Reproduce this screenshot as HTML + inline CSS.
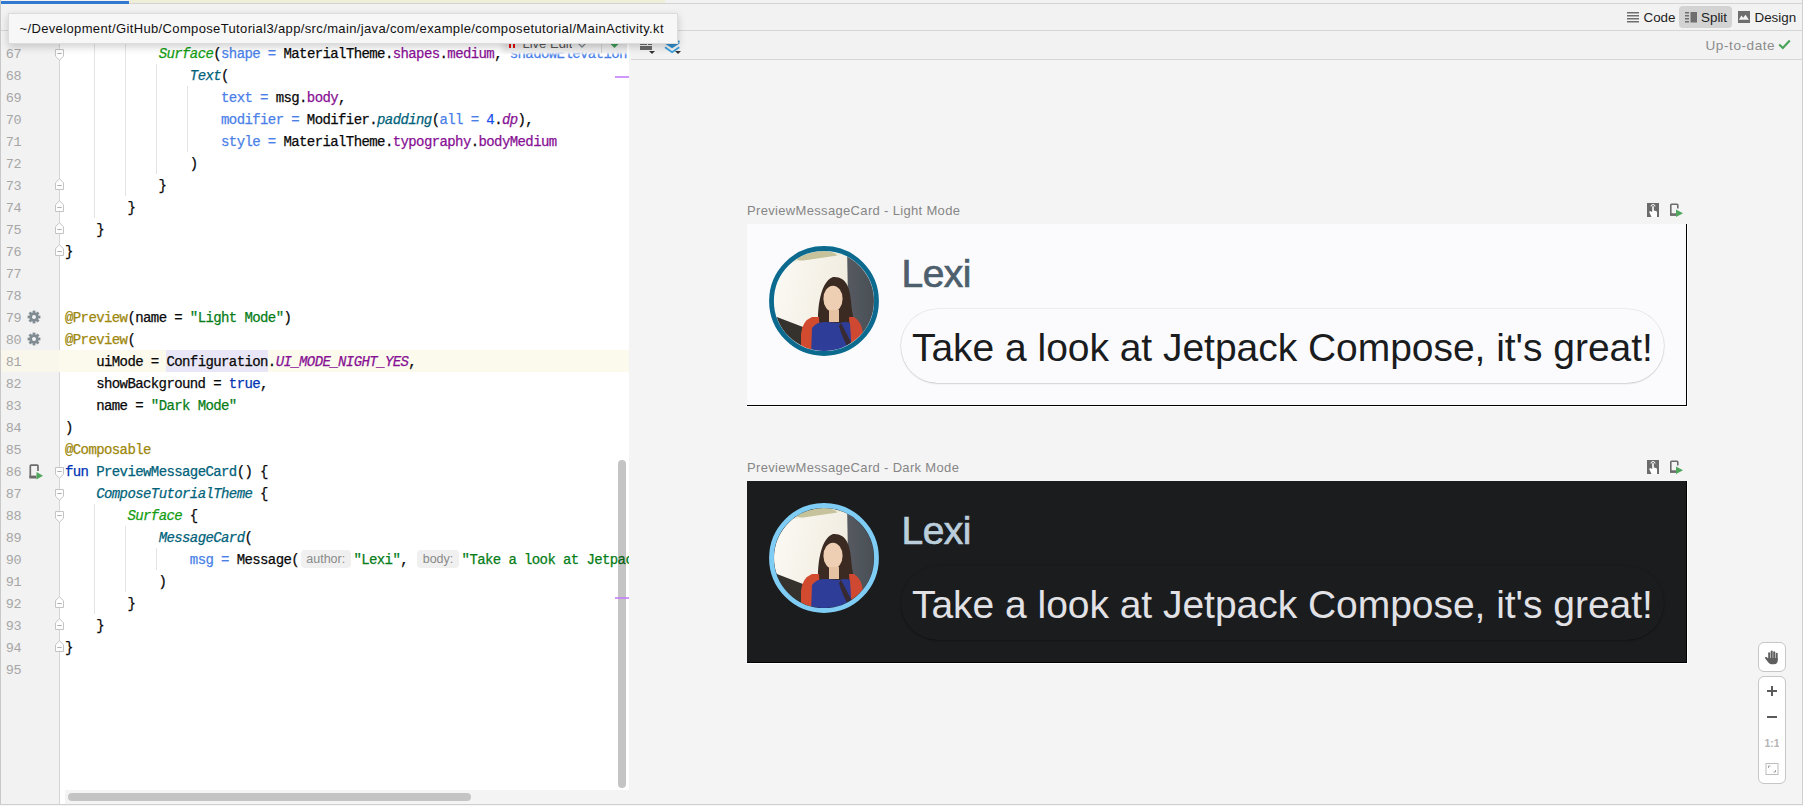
<!DOCTYPE html>
<html><head><meta charset="utf-8"><style>
*{margin:0;padding:0;box-sizing:border-box}
html,body{width:1803px;height:806px;overflow:hidden;background:#f3f3f3;font-family:"Liberation Sans",sans-serif}
.abs{position:absolute}
#editor{position:absolute;left:0;top:0;width:629px;height:806px;background:#fff;overflow:hidden}
#gutter{position:absolute;left:0;top:0;width:60px;height:806px;background:#f2f2f2}
.ln{position:absolute;left:65px;height:22px;line-height:22px;font-family:"Liberation Mono",monospace;font-size:14px;letter-spacing:-0.6px;white-space:pre;color:#080808;-webkit-text-stroke:0.25px currentColor}
.gn{position:absolute;left:0;width:21px;text-align:right;height:22px;line-height:22px;font-family:"Liberation Mono",monospace;font-size:13.5px;letter-spacing:-0.5px;color:#a6a6a6}
.hint{position:absolute;height:18px;line-height:18px;background:#f0f0f0;border-radius:4px;color:#8a8a8a;font-size:12.5px;text-align:center}

.lbl{position:absolute;font-size:13px;letter-spacing:0.33px;color:#868686;white-space:pre;line-height:16px}
.name{position:absolute;font-size:39px;line-height:44px;letter-spacing:-0.55px;-webkit-text-stroke:0.7px currentColor;white-space:pre}
.body{position:absolute;font-size:39px;line-height:44px;letter-spacing:-0.035px;white-space:pre}
.tb{position:absolute;font-size:13.4px;line-height:17px;color:#1e1e1e;white-space:pre}

</style></head><body>
<div id="editor">
  <div id="gutter"></div>
  <div class="abs" style="left:59px;top:0;width:1px;height:806px;background:#d6d6d6"></div>
  <div class="abs" style="left:0;top:350px;width:629px;height:22px;background:#fcfaed"></div>
  <div class="abs" style="left:1px;top:350px;width:58px;height:22px;background:#f9f7eb"></div>
  <div class="abs" style="left:166px;top:350px;width:102px;height:22px;background:#e9e6f7"></div>
  <div class="abs" style="left:94px;top:0px;width:1px;height:218px;background:#e4e4e4"></div><div class="abs" style="left:125px;top:0px;width:1px;height:196px;background:#e4e4e4"></div><div class="abs" style="left:156px;top:64px;width:1px;height:110px;background:#e4e4e4"></div><div class="abs" style="left:187px;top:86px;width:1px;height:66px;background:#e4e4e4"></div><div class="abs" style="left:94px;top:504px;width:1px;height:110px;background:#e4e4e4"></div><div class="abs" style="left:125px;top:526px;width:1px;height:66px;background:#e4e4e4"></div><div class="abs" style="left:156px;top:548px;width:1px;height:22px;background:#e4e4e4"></div>
  <div class="gn" style="top:44px">67</div><div class="gn" style="top:66px">68</div><div class="gn" style="top:88px">69</div><div class="gn" style="top:110px">70</div><div class="gn" style="top:132px">71</div><div class="gn" style="top:154px">72</div><div class="gn" style="top:176px">73</div><div class="gn" style="top:198px">74</div><div class="gn" style="top:220px">75</div><div class="gn" style="top:242px">76</div><div class="gn" style="top:264px">77</div><div class="gn" style="top:286px">78</div><div class="gn" style="top:308px">79</div><div class="gn" style="top:330px">80</div><div class="gn" style="top:352px">81</div><div class="gn" style="top:374px">82</div><div class="gn" style="top:396px">83</div><div class="gn" style="top:418px">84</div><div class="gn" style="top:440px">85</div><div class="gn" style="top:462px">86</div><div class="gn" style="top:484px">87</div><div class="gn" style="top:506px">88</div><div class="gn" style="top:528px">89</div><div class="gn" style="top:550px">90</div><div class="gn" style="top:572px">91</div><div class="gn" style="top:594px">92</div><div class="gn" style="top:616px">93</div><div class="gn" style="top:638px">94</div><div class="gn" style="top:660px">95</div>
  <svg class="abs" style="left:55px;top:48.5px" width="9" height="12" viewBox="0 0 9 12"><polygon points="0.5,0.5 8.5,0.5 8.5,7.3 4.5,11.2 0.5,7.3" fill="#fdfdfd" stroke="#c4c4c4" stroke-width="1"/><rect x="2.3" y="4.0" width="4.4" height="1" fill="#b0b0b0"/></svg><svg class="abs" style="left:55px;top:466.5px" width="9" height="12" viewBox="0 0 9 12"><polygon points="0.5,0.5 8.5,0.5 8.5,7.3 4.5,11.2 0.5,7.3" fill="#fdfdfd" stroke="#c4c4c4" stroke-width="1"/><rect x="2.3" y="4.0" width="4.4" height="1" fill="#b0b0b0"/></svg><svg class="abs" style="left:55px;top:488.5px" width="9" height="12" viewBox="0 0 9 12"><polygon points="0.5,0.5 8.5,0.5 8.5,7.3 4.5,11.2 0.5,7.3" fill="#fdfdfd" stroke="#c4c4c4" stroke-width="1"/><rect x="2.3" y="4.0" width="4.4" height="1" fill="#b0b0b0"/></svg><svg class="abs" style="left:55px;top:510.5px" width="9" height="12" viewBox="0 0 9 12"><polygon points="0.5,0.5 8.5,0.5 8.5,7.3 4.5,11.2 0.5,7.3" fill="#fdfdfd" stroke="#c4c4c4" stroke-width="1"/><rect x="2.3" y="4.0" width="4.4" height="1" fill="#b0b0b0"/></svg><svg class="abs" style="left:55px;top:177.5px" width="9" height="12" viewBox="0 0 9 12"><polygon points="0.5,11.5 8.5,11.5 8.5,4.7 4.5,0.8 0.5,4.7" fill="#fdfdfd" stroke="#c4c4c4" stroke-width="1"/><rect x="2.3" y="7.0" width="4.4" height="1" fill="#b0b0b0"/></svg><svg class="abs" style="left:55px;top:199.5px" width="9" height="12" viewBox="0 0 9 12"><polygon points="0.5,11.5 8.5,11.5 8.5,4.7 4.5,0.8 0.5,4.7" fill="#fdfdfd" stroke="#c4c4c4" stroke-width="1"/><rect x="2.3" y="7.0" width="4.4" height="1" fill="#b0b0b0"/></svg><svg class="abs" style="left:55px;top:221.5px" width="9" height="12" viewBox="0 0 9 12"><polygon points="0.5,11.5 8.5,11.5 8.5,4.7 4.5,0.8 0.5,4.7" fill="#fdfdfd" stroke="#c4c4c4" stroke-width="1"/><rect x="2.3" y="7.0" width="4.4" height="1" fill="#b0b0b0"/></svg><svg class="abs" style="left:55px;top:243.5px" width="9" height="12" viewBox="0 0 9 12"><polygon points="0.5,11.5 8.5,11.5 8.5,4.7 4.5,0.8 0.5,4.7" fill="#fdfdfd" stroke="#c4c4c4" stroke-width="1"/><rect x="2.3" y="7.0" width="4.4" height="1" fill="#b0b0b0"/></svg><svg class="abs" style="left:55px;top:595.5px" width="9" height="12" viewBox="0 0 9 12"><polygon points="0.5,11.5 8.5,11.5 8.5,4.7 4.5,0.8 0.5,4.7" fill="#fdfdfd" stroke="#c4c4c4" stroke-width="1"/><rect x="2.3" y="7.0" width="4.4" height="1" fill="#b0b0b0"/></svg><svg class="abs" style="left:55px;top:617.5px" width="9" height="12" viewBox="0 0 9 12"><polygon points="0.5,11.5 8.5,11.5 8.5,4.7 4.5,0.8 0.5,4.7" fill="#fdfdfd" stroke="#c4c4c4" stroke-width="1"/><rect x="2.3" y="7.0" width="4.4" height="1" fill="#b0b0b0"/></svg><svg class="abs" style="left:55px;top:639.5px" width="9" height="12" viewBox="0 0 9 12"><polygon points="0.5,11.5 8.5,11.5 8.5,4.7 4.5,0.8 0.5,4.7" fill="#fdfdfd" stroke="#c4c4c4" stroke-width="1"/><rect x="2.3" y="7.0" width="4.4" height="1" fill="#b0b0b0"/></svg>
  <svg class="abs" style="left:27px;top:310px" width="14" height="14" viewBox="0 0 14 14"><g fill="#808b92"><circle cx="7" cy="7" r="4.6"/><rect x="5.6" y="0.6" width="2.8" height="3" transform="rotate(0 7 7)"/><rect x="5.6" y="0.6" width="2.8" height="3" transform="rotate(45 7 7)"/><rect x="5.6" y="0.6" width="2.8" height="3" transform="rotate(90 7 7)"/><rect x="5.6" y="0.6" width="2.8" height="3" transform="rotate(135 7 7)"/><rect x="5.6" y="0.6" width="2.8" height="3" transform="rotate(180 7 7)"/><rect x="5.6" y="0.6" width="2.8" height="3" transform="rotate(225 7 7)"/><rect x="5.6" y="0.6" width="2.8" height="3" transform="rotate(270 7 7)"/><rect x="5.6" y="0.6" width="2.8" height="3" transform="rotate(315 7 7)"/></g><circle cx="7" cy="7" r="2" fill="#f2f2f2"/></svg><svg class="abs" style="left:27px;top:332px" width="14" height="14" viewBox="0 0 14 14"><g fill="#808b92"><circle cx="7" cy="7" r="4.6"/><rect x="5.6" y="0.6" width="2.8" height="3" transform="rotate(0 7 7)"/><rect x="5.6" y="0.6" width="2.8" height="3" transform="rotate(45 7 7)"/><rect x="5.6" y="0.6" width="2.8" height="3" transform="rotate(90 7 7)"/><rect x="5.6" y="0.6" width="2.8" height="3" transform="rotate(135 7 7)"/><rect x="5.6" y="0.6" width="2.8" height="3" transform="rotate(180 7 7)"/><rect x="5.6" y="0.6" width="2.8" height="3" transform="rotate(225 7 7)"/><rect x="5.6" y="0.6" width="2.8" height="3" transform="rotate(270 7 7)"/><rect x="5.6" y="0.6" width="2.8" height="3" transform="rotate(315 7 7)"/></g><circle cx="7" cy="7" r="2" fill="#f2f2f2"/></svg><svg class="abs" style="left:28px;top:463px" width="16" height="17" viewBox="0 0 16 17"><path d="M2.3,15 L2.3,3 Q2.3,2.2 3.1,2.2 L9.2,2.2 Q10,2.2 10,3 L10,8" fill="none" stroke="#6b6b6b" stroke-width="1.7"/><rect x="1.5" y="12.6" width="7" height="2.9" fill="#6b6b6b"/><polygon points="8.5,9 15,12.7 8.5,16.5" fill="#4fa65c"/></svg>
  <div class="ln" style="top:43px"><span style="color:#080808">            </span><span style="color:#129c12;font-style:italic">Surface</span><span style="color:#080808">(</span><span style="color:#4a7fe8">shape =</span><span style="color:#080808"> MaterialTheme.</span><span style="color:#871094">shapes</span><span style="color:#080808">.</span><span style="color:#871094">medium</span><span style="color:#080808">, </span><span style="color:#4a7fe8">shadowElevation</span></div><div class="ln" style="top:65px"><span style="color:#080808">                </span><span style="color:#00627a;font-style:italic">Text</span><span style="color:#080808">(</span></div><div class="ln" style="top:87px"><span style="color:#080808">                    </span><span style="color:#4a7fe8">text =</span><span style="color:#080808"> msg.</span><span style="color:#871094">body</span><span style="color:#080808">,</span></div><div class="ln" style="top:109px"><span style="color:#080808">                    </span><span style="color:#4a7fe8">modifier =</span><span style="color:#080808"> Modifier.</span><span style="color:#00627a;font-style:italic">padding</span><span style="color:#080808">(</span><span style="color:#4a7fe8">all =</span><span style="color:#080808"> </span><span style="color:#1750eb">4</span><span style="color:#080808">.</span><span style="color:#871094;font-style:italic">dp</span><span style="color:#080808">),</span></div><div class="ln" style="top:131px"><span style="color:#080808">                    </span><span style="color:#4a7fe8">style =</span><span style="color:#080808"> MaterialTheme.</span><span style="color:#871094">typography</span><span style="color:#080808">.</span><span style="color:#871094">bodyMedium</span></div><div class="ln" style="top:153px"><span style="color:#080808">                )</span></div><div class="ln" style="top:175px"><span style="color:#080808">            }</span></div><div class="ln" style="top:197px"><span style="color:#080808">        }</span></div><div class="ln" style="top:219px"><span style="color:#080808">    }</span></div><div class="ln" style="top:241px"><span style="color:#080808">}</span></div><div class="ln" style="top:307px"><span style="color:#9e880d">@Preview</span><span style="color:#080808">(name = </span><span style="color:#067d17">"Light Mode"</span><span style="color:#080808">)</span></div><div class="ln" style="top:329px"><span style="color:#9e880d">@Preview</span><span style="color:#080808">(</span></div><div class="ln" style="top:351px"><span style="color:#080808">    uiMode = </span><span style="color:#080808">Configuration</span><span style="color:#080808">.</span><span style="color:#871094;font-style:italic">UI_MODE_NIGHT_YES</span><span style="color:#080808">,</span></div><div class="ln" style="top:373px"><span style="color:#080808">    showBackground = </span><span style="color:#0033b3">true</span><span style="color:#080808">,</span></div><div class="ln" style="top:395px"><span style="color:#080808">    name = </span><span style="color:#067d17">"Dark Mode"</span></div><div class="ln" style="top:417px"><span style="color:#080808">)</span></div><div class="ln" style="top:439px"><span style="color:#9e880d">@Composable</span></div><div class="ln" style="top:461px"><span style="color:#0033b3">fun</span><span style="color:#080808"> </span><span style="color:#00627a">PreviewMessageCard</span><span style="color:#080808">() {</span></div><div class="ln" style="top:483px"><span style="color:#080808">    </span><span style="color:#00627a;font-style:italic">ComposeTutorialTheme</span><span style="color:#080808"> {</span></div><div class="ln" style="top:505px"><span style="color:#080808">        </span><span style="color:#129c12;font-style:italic">Surface</span><span style="color:#080808"> {</span></div><div class="ln" style="top:527px"><span style="color:#080808">            </span><span style="color:#00627a;font-style:italic">MessageCard</span><span style="color:#080808">(</span></div><div class="ln" style="top:549px"><span style="color:#080808">                </span><span style="color:#4a7fe8">msg =</span><span style="color:#080808"> Message(</span></div><div class="ln" style="top:571px"><span style="color:#080808">            )</span></div><div class="ln" style="top:593px"><span style="color:#080808">        }</span></div><div class="ln" style="top:615px"><span style="color:#080808">    }</span></div><div class="ln" style="top:637px"><span style="color:#080808">}</span></div><div class="hint" style="left:301px;top:550px;width:49.5px">author:</div><div class="ln" style="top:549px;left:353.4px"><span style="color:#067d17">"Lexi"</span><span style="color:#080808">,</span></div><div class="hint" style="left:417px;top:550px;width:42px">body:</div><div class="ln" style="top:549px;left:461.6px"><span style="color:#067d17">"Take a look at Jetpack Compose"</span></div>
  <div class="abs" style="left:65px;top:790px;width:564px;height:14px;background:#f4f4f4"></div>
  <div class="abs" style="left:68px;top:793px;width:403px;height:8px;border-radius:4px;background:#c4c4c4"></div>
  <div class="abs" style="left:0;top:804px;width:629px;height:1px;background:#d0d0d0"></div>
  <div class="abs" style="left:618px;top:460px;width:8px;height:328px;border-radius:4px;background:rgba(0,0,0,0.231)"></div>
  <div class="abs" style="left:615px;top:76px;width:14px;height:2px;background:rgba(195,125,250,0.8)"></div><div class="abs" style="left:615px;top:597px;width:14px;height:2px;background:rgba(195,125,250,0.8)"></div>
  
<div class="abs" style="left:498px;top:43px;width:129px;height:12px;background:linear-gradient(#e4e4e4,#f0f0f0 75%,rgba(246,246,246,0.6) 90%,rgba(255,255,255,0));-webkit-mask-image:linear-gradient(to right,transparent,#000 8px)"></div>
<div class="abs" style="left:509px;top:43px;width:2px;height:5px;background:#e01010"></div>
<div class="abs" style="left:513px;top:43px;width:2px;height:5px;background:#e01010"></div>
<div class="abs" style="left:522.5px;top:36px;font-size:13px;line-height:16px;color:#555;white-space:pre;clip-path:inset(7px 0 0 0)">Live Edit</div>
<svg class="abs" style="left:577px;top:43px" width="10" height="6" viewBox="0 0 10 6"><path d="M1,0 L5,4 L9,0" fill="none" stroke="#7a8590" stroke-width="1.3"/></svg>
<div class="abs" style="left:601px;top:43px;width:1px;height:10px;background:#d0d0d0"></div>
<svg class="abs" style="left:609px;top:43px" width="11" height="6" viewBox="0 0 11 6"><polygon points="0.5,0 10.5,0 5.5,5" fill="#3f9a52"/></svg>

</div>

<div id="preview" class="abs" style="left:629px;top:0;width:1174px;height:806px;background:#f4f4f4"></div>
<!-- top tab bar -->
<div class="abs" style="left:0;top:0;width:1803px;height:3px;background:#f2f2f2"></div>
<div class="abs" style="left:129px;top:0;width:536px;height:3px;background:#efeed9"></div>
<!-- toolbar row -->
<div class="abs" style="left:0;top:3px;width:1802px;height:27px;background:#f2f2f2"></div>
<div class="abs" style="left:129px;top:3px;width:1673px;height:1px;background:#d4d4d4"></div>
<div class="abs" style="left:1px;top:1px;width:128px;height:3px;background:#3079cf"></div>
<div class="abs" style="left:0;top:30px;width:1802px;height:1px;background:#d6d6d6"></div>
<div class="abs" style="left:631px;top:31px;width:1171px;height:28px;background:#f2f2f2"></div>
<div class="abs" style="left:631px;top:59px;width:1171px;height:1px;background:#d6d6d6"></div>
<div class="abs" style="left:1802px;top:0;width:1px;height:806px;background:#d0d0d0"></div>
<div class="abs" style="left:0;top:0;width:1px;height:806px;background:#c9c9c9"></div>
<div class="abs" style="left:0;top:804px;width:1803px;height:1px;background:#d0d0d0"></div>
<div class="abs" style="left:0;top:805px;width:1803px;height:1px;background:#f6f6f6"></div>
<!-- Code / Split / Design -->
<svg class="abs" style="left:1627px;top:12px" width="12" height="11" viewBox="0 0 12 11"><g fill="#6e6e6e"><rect y="0" width="12" height="1.5"/><rect y="3" width="12" height="1.5"/><rect y="6" width="12" height="1.5"/><rect y="9" width="12" height="1.5"/></g></svg>
<div class="tb" style="left:1643.5px;top:9px">Code</div>
<div class="abs" style="left:1679px;top:6px;width:53px;height:22px;border-radius:4px;background:#d3d3d3"></div>
<svg class="abs" style="left:1685px;top:12px" width="12" height="11" viewBox="0 0 12 11"><g fill="#6e6e6e"><rect x="0" y="0" width="4" height="1.5"/><rect x="0" y="3" width="4" height="1.5"/><rect x="0" y="6" width="4" height="1.5"/><rect x="0" y="9" width="4" height="1.5"/><rect x="5.5" y="0" width="6.5" height="10.5"/></g></svg>
<div class="tb" style="left:1701px;top:9px">Split</div>
<svg class="abs" style="left:1738px;top:11px" width="12" height="12" viewBox="0 0 12 12"><rect width="12" height="12" fill="#6e6e6e"/><polygon points="0.9,8.7 3.4,4.6 5.2,6.8 7.5,3.7 10.9,8.7" fill="#f4f4f4"/></svg>
<div class="tb" style="left:1754.5px;top:9px">Design</div>
<!-- up-to-date -->
<div class="tb" style="left:1705.5px;top:37px;font-size:13.6px;letter-spacing:0.55px;color:#8c8c8c">Up-to-date</div>
<svg class="abs" style="left:1778px;top:39px" width="13" height="11" viewBox="0 0 13 11"><path d="M1.2,5.5 L4.8,9 L11.8,1.5" fill="none" stroke="#4aa35b" stroke-width="2.2"/></svg>
<!-- left preview toolbar icons -->
<svg class="abs" style="left:639px;top:42px" width="18" height="12" viewBox="0 0 18 12"><g fill="#6b6b6b"><rect x="1" y="1" width="7" height="2"/><rect x="9" y="1" width="4" height="2"/><rect x="1" y="4" width="12" height="4"/></g><polygon points="10,9 16,9 13,12" fill="#333"/></svg>
<svg class="abs" style="left:664px;top:38px" width="20" height="17" viewBox="0 0 20 17"><polygon points="0.2,5.2 16.1,5.2 8.1,10.2" fill="#2e8ecb"/><rect x="13.8" y="2.6" width="1.8" height="2" fill="#2e8ecb"/><path d="M1,9.2 L8.1,14.2 L15.3,9.2" fill="none" stroke="#3a9fdc" stroke-width="1.8"/><polygon points="11,13 17,13 14,16" fill="#333"/></svg>

<div class="lbl" style="left:747px;top:203px">PreviewMessageCard - Light Mode</div>
<svg class="abs" style="left:1647px;top:203px" width="12" height="14" viewBox="0 0 12 14">
<rect x="0" y="0" width="12" height="14" fill="#6b6b6b"/>
<path d="M4,3.5 a2,2 0 1 1 4,0" fill="none" stroke="#fff" stroke-width="1"/>
<path d="M5.2,3.5 L5.2,9 L3,8 L2.2,9 L4.5,14 L10,14 L10,9.5 Q10,8 9,8 L6.8,7.5 L6.8,3.5 Q6,2.6 5.2,3.5Z" fill="#fff"/>
</svg>
<svg class="abs" style="left:1669px;top:203px" width="14" height="14" viewBox="0 0 14 14">
<path d="M1.8,12 L1.8,2 Q1.8,1.2 2.6,1.2 L8,1.2 Q8.8,1.2 8.8,2 L8.8,5.5" fill="none" stroke="#6b6b6b" stroke-width="1.6"/>
<rect x="1" y="10.3" width="6" height="2.6" fill="#6b6b6b"/>
<polygon points="7,6.5 14,10.2 7,14" fill="#4fa65c"/>
</svg>
<div class="abs" style="left:747px;top:224px;width:940px;height:182px;background:#fbfbfe">
  <div class="abs" style="right:0;top:0;width:1px;height:182px;background:#000"></div>
  <div class="abs" style="left:0;bottom:0;width:940px;height:1px;background:#000"></div>
</div>
<div class="abs" style="left:1687px;top:224px;width:1px;height:183px;background:#fff"></div>
<div class="abs" style="left:746px;top:406px;width:941px;height:1px;background:#fff"></div>
<svg class="abs" style="left:769.3px;top:246.4px" width="110" height="110" viewBox="0 0 110 110">
<defs><clipPath id="c246.4"><circle cx="55" cy="55" r="50"/></clipPath><filter id="b246.4"><feGaussianBlur stdDeviation="0.7"/></filter><linearGradient id="w246.4" x1="0" y1="0" x2="1" y2="0.3"><stop offset="0" stop-color="#fcfbf6"/><stop offset="1" stop-color="#f1ece0"/></linearGradient><linearGradient id="g246.4" x1="0" y1="0" x2="1" y2="0"><stop offset="0" stop-color="#565b62"/><stop offset="1" stop-color="#474c52"/></linearGradient></defs>
<g clip-path="url(#c246.4)"><g filter="url(#b246.4)">
<rect x="0" y="0" width="110" height="110" fill="#ecead8"/>
<ellipse cx="46" cy="10" rx="22" ry="6" fill="#c5c29c"/>
<polygon points="0,27 24,16 79,8 79,110 0,110" fill="url(#w246.4)"/>
<polygon points="78,0 110,0 110,110 80,110" fill="url(#g246.4)"/>
<polygon points="0,68 34,81 34,110 0,110" fill="#36332f"/>
<path d="M50,92 C47,68 50,36 64,31 C77,30 81,42 82,55 C83,70 86,80 91,93 L86,102 L52,102 Z" fill="#3a2920"/>
<ellipse cx="64" cy="52.8" rx="9.6" ry="13" fill="#efcfb4"/>
<rect x="60" y="64" width="10" height="12" fill="#e6c2a3"/>
<path d="M32,110 L32,88 Q33,75 43,71 L50,71 L52,110 Z" fill="#d24b2f"/>
<path d="M80,71 L85,71 Q93,76 94,88 L94,100 L82,104 Z" fill="#cf4a31"/>
<path d="M42,110 L43,82 Q48,75 57,76 L71,77 Q77,75 81,77 L83,110 Z" fill="#2f3c97"/>
<path d="M72,77 C76,85 80,92 84,100 L80,104 C76,96 72,88 70,80 Z" fill="#3a2920" opacity="0.85"/>
</g></g>
<circle cx="55" cy="55" r="52.5" fill="none" stroke="#0b6a8e" stroke-width="4.8"/>
</svg>
<div class="name" style="left:901.5px;top:252.2px;color:#4d5f6d">Lexi</div>
<div class="abs" style="left:901px;top:308.5px;width:763px;height:74.5px;border-radius:37px;background:#fbfbfe;box-shadow:0 0 0 0.6px rgba(0,0,0,0.09),0 0.8px 1.8px rgba(0,0,0,0.16)"></div>
<div class="body" style="left:912px;top:326px;color:#1a1c1e">Take a look at Jetpack Compose, it's great!</div>


<div class="lbl" style="left:747px;top:460px">PreviewMessageCard - Dark Mode</div>
<svg class="abs" style="left:1647px;top:460px" width="12" height="14" viewBox="0 0 12 14">
<rect x="0" y="0" width="12" height="14" fill="#6b6b6b"/>
<path d="M4,3.5 a2,2 0 1 1 4,0" fill="none" stroke="#fff" stroke-width="1"/>
<path d="M5.2,3.5 L5.2,9 L3,8 L2.2,9 L4.5,14 L10,14 L10,9.5 Q10,8 9,8 L6.8,7.5 L6.8,3.5 Q6,2.6 5.2,3.5Z" fill="#fff"/>
</svg>
<svg class="abs" style="left:1669px;top:460px" width="14" height="14" viewBox="0 0 14 14">
<path d="M1.8,12 L1.8,2 Q1.8,1.2 2.6,1.2 L8,1.2 Q8.8,1.2 8.8,2 L8.8,5.5" fill="none" stroke="#6b6b6b" stroke-width="1.6"/>
<rect x="1" y="10.3" width="6" height="2.6" fill="#6b6b6b"/>
<polygon points="7,6.5 14,10.2 7,14" fill="#4fa65c"/>
</svg>
<div class="abs" style="left:747px;top:481px;width:940px;height:182px;background:#1a1c1e">
  <div class="abs" style="right:0;top:0;width:1px;height:182px;background:#000"></div>
  <div class="abs" style="left:0;bottom:0;width:940px;height:1px;background:#000"></div>
</div>
<div class="abs" style="left:1687px;top:481px;width:1px;height:183px;background:#fff"></div>
<div class="abs" style="left:746px;top:663px;width:941px;height:1px;background:#fff"></div>
<svg class="abs" style="left:769.3px;top:503.4px" width="110" height="110" viewBox="0 0 110 110">
<defs><clipPath id="c503.4"><circle cx="55" cy="55" r="50"/></clipPath><filter id="b503.4"><feGaussianBlur stdDeviation="0.7"/></filter><linearGradient id="w503.4" x1="0" y1="0" x2="1" y2="0.3"><stop offset="0" stop-color="#fcfbf6"/><stop offset="1" stop-color="#f1ece0"/></linearGradient><linearGradient id="g503.4" x1="0" y1="0" x2="1" y2="0"><stop offset="0" stop-color="#565b62"/><stop offset="1" stop-color="#474c52"/></linearGradient></defs>
<g clip-path="url(#c503.4)"><g filter="url(#b503.4)">
<rect x="0" y="0" width="110" height="110" fill="#ecead8"/>
<ellipse cx="46" cy="10" rx="22" ry="6" fill="#c5c29c"/>
<polygon points="0,27 24,16 79,8 79,110 0,110" fill="url(#w503.4)"/>
<polygon points="78,0 110,0 110,110 80,110" fill="url(#g503.4)"/>
<polygon points="0,68 34,81 34,110 0,110" fill="#36332f"/>
<path d="M50,92 C47,68 50,36 64,31 C77,30 81,42 82,55 C83,70 86,80 91,93 L86,102 L52,102 Z" fill="#3a2920"/>
<ellipse cx="64" cy="52.8" rx="9.6" ry="13" fill="#efcfb4"/>
<rect x="60" y="64" width="10" height="12" fill="#e6c2a3"/>
<path d="M32,110 L32,88 Q33,75 43,71 L50,71 L52,110 Z" fill="#d24b2f"/>
<path d="M80,71 L85,71 Q93,76 94,88 L94,100 L82,104 Z" fill="#cf4a31"/>
<path d="M42,110 L43,82 Q48,75 57,76 L71,77 Q77,75 81,77 L83,110 Z" fill="#2f3c97"/>
<path d="M72,77 C76,85 80,92 84,100 L80,104 C76,96 72,88 70,80 Z" fill="#3a2920" opacity="0.85"/>
</g></g>
<circle cx="55" cy="55" r="52.5" fill="none" stroke="#7fcdf5" stroke-width="4.8"/>
</svg>
<div class="name" style="left:901.5px;top:509.2px;color:#bbcedb">Lexi</div>
<div class="abs" style="left:901px;top:565.5px;width:763px;height:74.5px;border-radius:37px;background:#1a1c1e;box-shadow:0 0.6px 1.6px rgba(0,0,0,0.5)"></div>
<div class="body" style="left:912px;top:583px;color:#e2e2e6">Take a look at Jetpack Compose, it's great!</div>

<!-- zoom controls -->
<div class="abs" style="left:1758px;top:642px;width:28px;height:30px;border:1px solid #c6c6c6;border-radius:6px;background:#fff"></div>
<svg class="abs" style="left:1764px;top:650px" width="15" height="15" viewBox="0 0 15 15"><g fill="#5f5f5f"><rect x="4.2" y="2.2" width="2" height="8" rx="1"/><rect x="6.7" y="0.6" width="2" height="9" rx="1"/><rect x="9.2" y="1.2" width="2" height="9" rx="1"/><rect x="11.7" y="2.8" width="2" height="8" rx="1"/><path d="M4.2,8 L13.7,8 L13.7,10.5 Q13.7,14.2 10,14.2 L7.2,14.2 Q5.6,14.2 4.6,12.8 L1.2,8.6 Q0.6,7.6 1.6,7.1 Q2.6,6.8 3.4,7.7 L4.2,8.6Z"/></g></svg>
<div class="abs" style="left:1758px;top:676px;width:28px;height:108px;border:1px solid #c6c6c6;border-radius:6px;background:#fff"></div>
<svg class="abs" style="left:1765px;top:684px" width="14" height="100" viewBox="0 0 14 100">
<g fill="#5a5a5a"><rect x="2" y="6" width="10" height="2"/><rect x="6" y="2" width="2" height="10"/><rect x="2" y="32" width="10" height="2"/></g>
<text x="7" y="63" text-anchor="middle" font-family="Liberation Sans" font-weight="bold" font-size="10.5" fill="#b4b4b4">1:1</text>
<rect x="1" y="79.5" width="12" height="11" fill="none" stroke="#bdbdbd" stroke-width="1"/>
<path d="M3.5,84 L3.5,82 L5.5,82 M10.5,86 L10.5,88 L8.5,88" fill="none" stroke="#9a9a9a" stroke-width="0.9"/>
</svg>


<div class="abs" style="left:8px;top:13px;width:670px;height:31px;background:#f7f7f7;border:1px solid #dcdcdc;box-shadow:0 3px 8px rgba(0,0,0,0.18)"></div>
<div class="abs" style="left:19.5px;top:21px;font-size:13px;line-height:16px;letter-spacing:0.36px;color:#111;white-space:pre">~/Development/GitHub/ComposeTutorial3/app/src/main/java/com/example/composetutorial/MainActivity.kt</div>

</body></html>
